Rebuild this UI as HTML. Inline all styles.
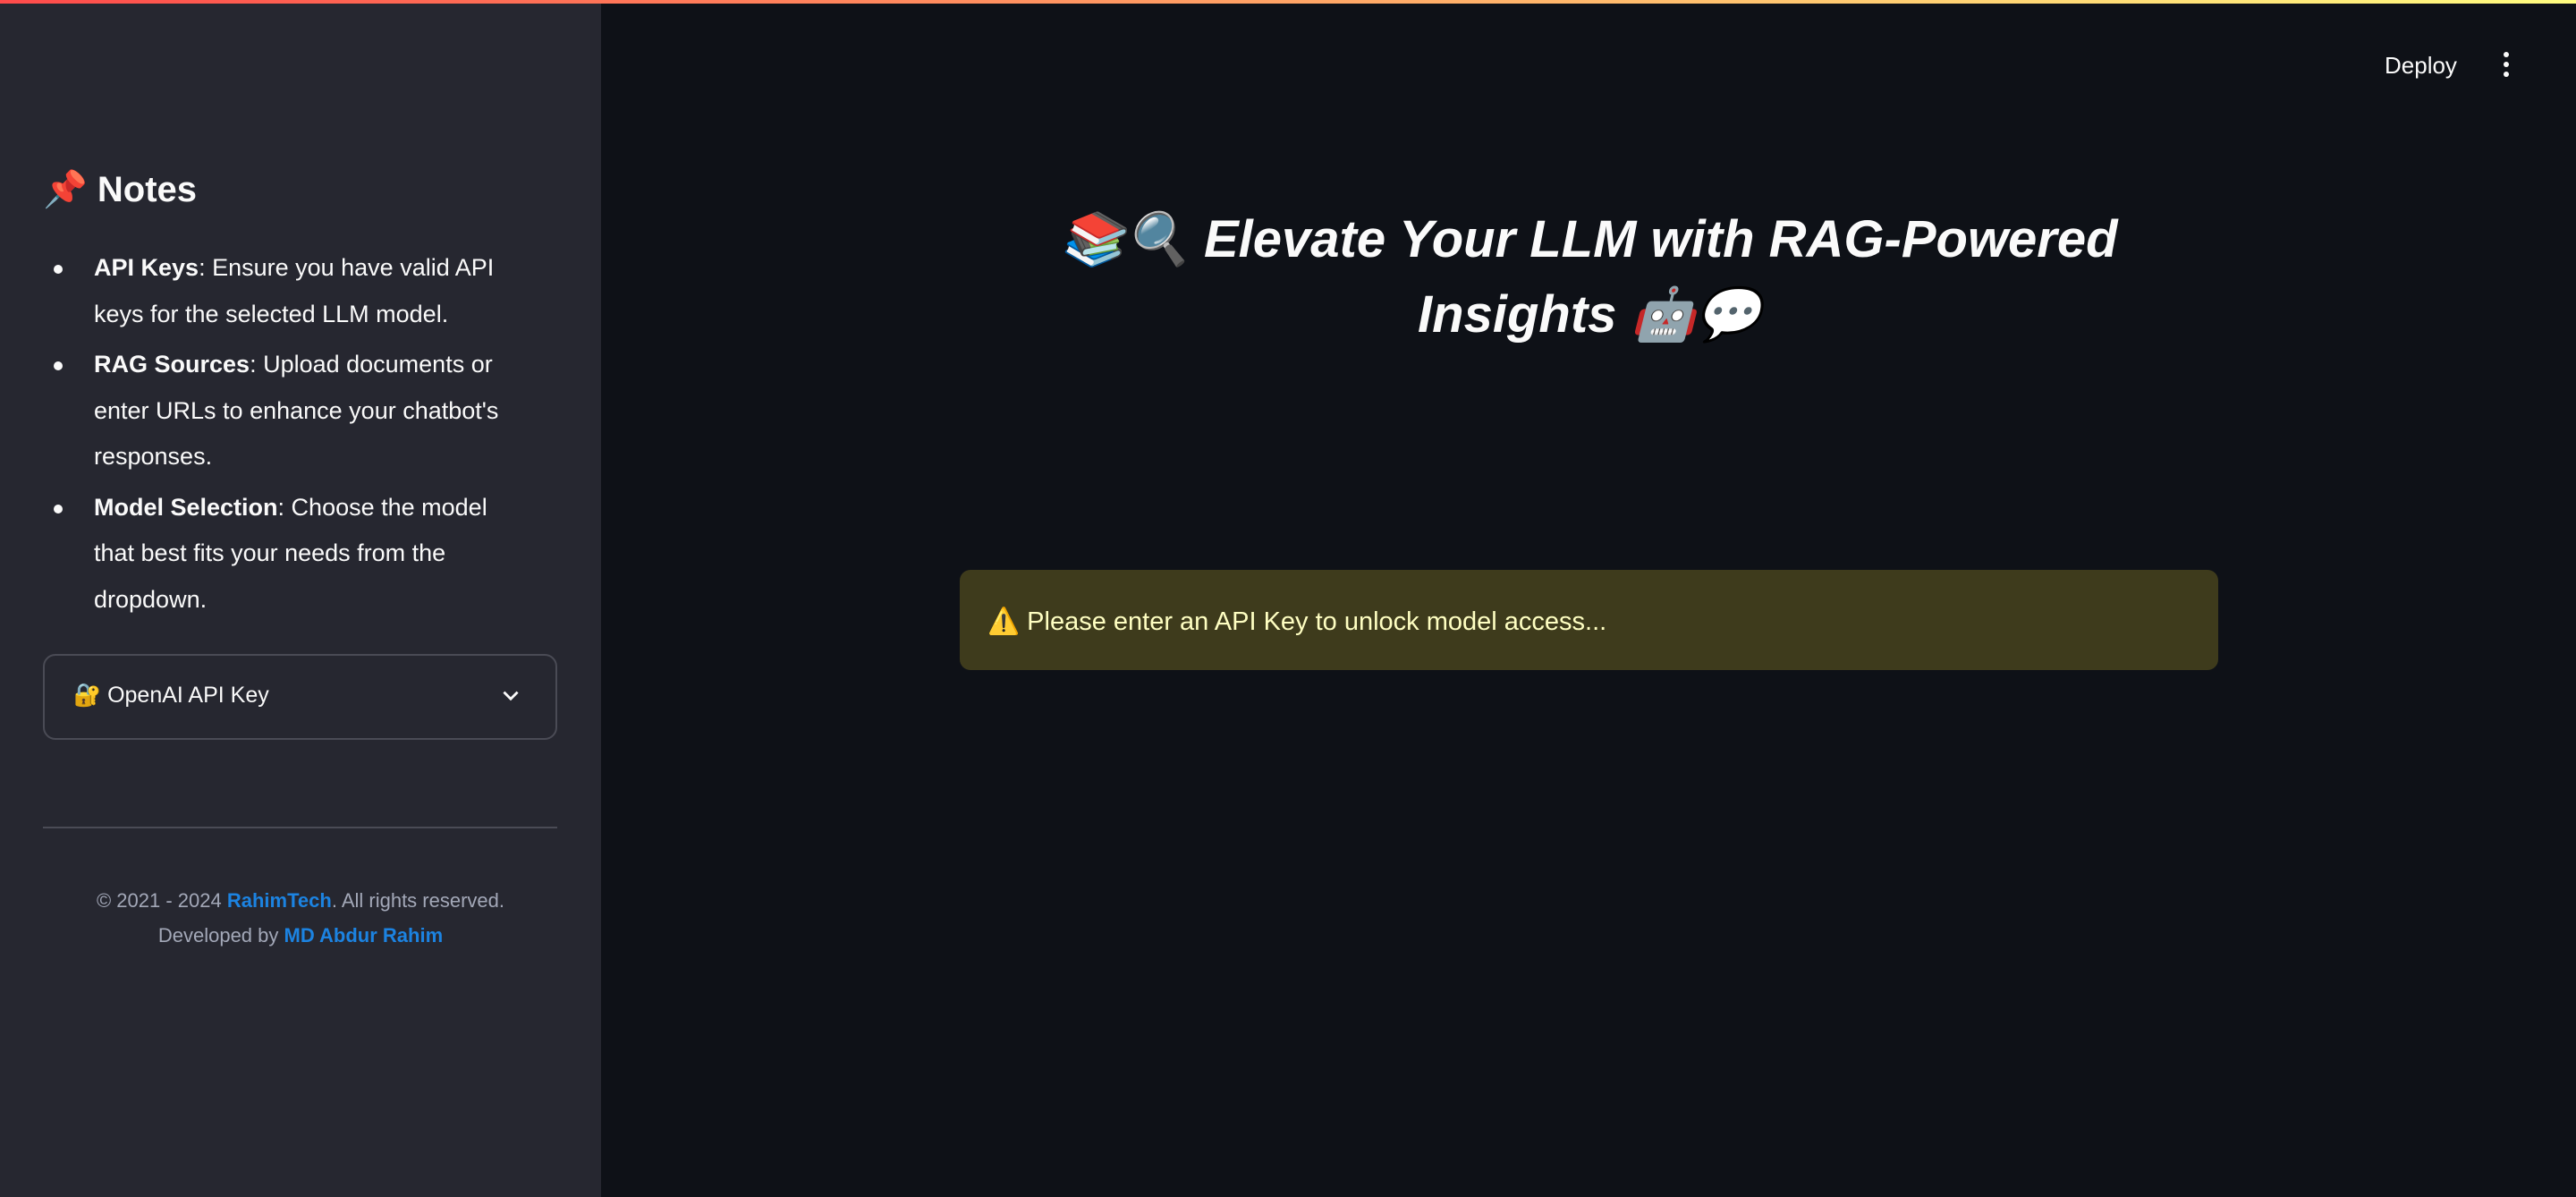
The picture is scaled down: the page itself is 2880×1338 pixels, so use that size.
<!DOCTYPE html>
<html><head><meta charset="utf-8"><style>
*{margin:0;padding:0;box-sizing:border-box}
body{width:2880px;height:1338px;background:#0e1117;font-family:"Liberation Sans","Noto Sans CJK JP",sans-serif;color:#fafafa;position:relative;overflow:hidden}
.bar{position:absolute;top:0;left:0;width:2880px;height:4px;background:linear-gradient(90deg,#ff4b4b,#fffd80)}
.side{position:absolute;top:4px;left:0;width:672px;height:1334px;background:#262730}
.notes{position:absolute;left:48px;top:184px;font-size:40px;font-weight:bold}
ul{position:absolute;left:105px;top:270px;width:560px;font-size:27px;line-height:51.5px;list-style:none;white-space:nowrap}
li{position:relative;margin-bottom:5px}
li:before{content:"";position:absolute;left:-45px;top:22px;width:10px;height:10px;border-radius:50%;background:#fafafa}
.exp{position:absolute;left:48px;top:727px;width:575px;height:96px;border:2px solid #4a4b55;border-radius:14px}
.exp span{position:absolute;left:32px;top:30px;font-size:25px}
.exp svg{position:absolute;left:508px;top:32px}
.hr{position:absolute;left:48px;top:920px;width:575px;height:2px;background:#4a4b55}
.foot{position:absolute;left:0;width:672px;text-align:center;font-size:22px;color:#a3a8b8}
.foot b{color:#1c83e1}
.deploy{position:absolute;left:2666px;top:58px;font-size:26px}
.dots{position:absolute;left:2799px;top:58px}
.dots i{display:block;width:6px;height:6px;border-radius:50%;background:#fafafa;margin-bottom:5px}
h1{position:absolute;left:1073px;width:1407px;top:226px;text-align:center;font-size:58px;font-style:italic;font-weight:bold;line-height:84px}
.warn{position:absolute;left:1073px;top:637px;width:1407px;height:112px;background:#3e3b1c;border-radius:12px;color:#ffffc2;font-size:29px;padding:41px 0 0 31px}
</style></head><body>
<div class="bar"></div>
<div class="side">
<div class="notes">📌 Notes</div>
<ul>
<li><b>API Keys</b>: Ensure you have valid API<br>keys for the selected LLM model.</li>
<li><b>RAG Sources</b>: Upload documents or<br>enter URLs to enhance your chatbot's<br>responses.</li>
<li><b>Model Selection</b>: Choose the model<br>that best fits your needs from the<br>dropdown.</li>
</ul>
<div class="exp"><span>🔐 OpenAI API Key</span><svg width="26" height="26" viewBox="0 0 24 24"><path d="M5 8l7 7 7-7" fill="none" stroke="#fafafa" stroke-width="2.6"/></svg></div>
<div class="hr"></div>
<div class="foot" style="top:990px">© 2021 - 2024 <b>RahimTech</b>. All rights reserved.</div>
<div class="foot" style="top:1029px">Developed by <b>MD Abdur Rahim</b></div>
</div>
<div class="deploy">Deploy</div>
<div class="dots"><i></i><i></i><i></i></div>
<h1>📚🔍 Elevate Your LLM with RAG-Powered<br>Insights 🤖💬</h1>
<div class="warn">⚠️ Please enter an API Key to unlock model access...</div>
</body></html>
